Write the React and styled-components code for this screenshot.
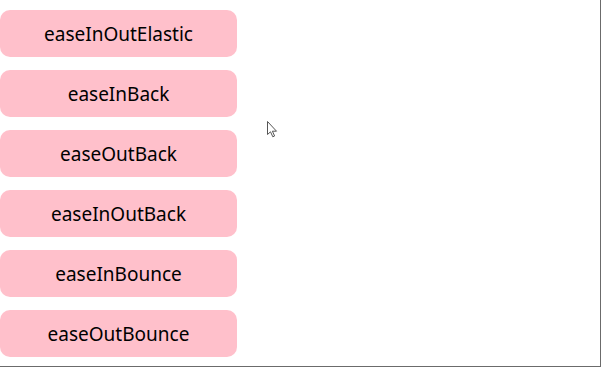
import React from 'react'
import styled, { createGlobalStyle } from 'styled-components'

const GlobalStyle = createGlobalStyle`
  html, body {
    margin: 0;
    padding: 0;
    background: #ffffff;
  }
`

const Frame = styled.div`
  position: relative;
  width: 600px;
  height: 366px;
  border-right: 1px solid #6b6b6b;
  border-bottom: 1px solid #6b6b6b;
  background: #ffffff;
  overflow: hidden;
`

const List = styled.div`
  display: flex;
  flex-direction: column;
  gap: 13px;
  padding-top: 10px;
`

const EaseButton = styled.button`
  width: 237px;
  height: 47px;
  margin: 0;
  padding: 0;
  border: none;
  border-radius: 10px;
  background: #ffc0cb;
  color: #000000;
  font-family: "Noto Sans", "Open Sans", sans-serif;
  font-size: 19px;
  cursor: pointer;
`

const Cursor = styled.svg`
  position: absolute;
  left: 267px;
  top: 121px;
`

const names = [
  'easeInOutElastic',
  'easeInBack',
  'easeOutBack',
  'easeInOutBack',
  'easeInBounce',
  'easeOutBounce',
]

export default function App() {
  return (
    <>
      <GlobalStyle />
      <Frame>
        <List>
          {names.map((n) => (
            <EaseButton key={n}>{n}</EaseButton>
          ))}
        </List>
        <Cursor width="12" height="18" viewBox="0 0 12 18">
          <path
            d="M0.5 0.5 L0.5 13.5 L3.5 10.8 L5.8 15.8 L7.6 15 L5.4 10.2 L9.5 10.2 Z"
            fill="#ffffff"
            stroke="#555555"
            strokeWidth="1"
            strokeLinejoin="miter"
          />
        </Cursor>
      </Frame>
    </>
  )
}
